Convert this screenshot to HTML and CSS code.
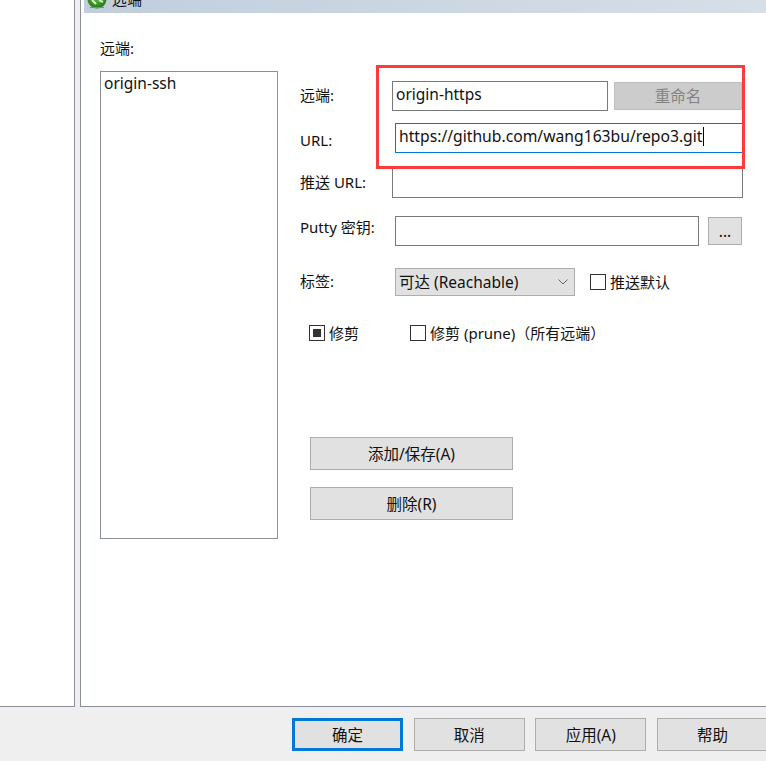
FILE: index.html
```html
<!DOCTYPE html>
<html lang="zh-CN">
<head>
<meta charset="utf-8">
<title>远端</title>
<link rel="stylesheet" href="styles.css">
</head>
<body>
<div class="main">
  <div class="side"></div>
  <div class="panel">
    <div class="titlebar">
      <svg class="logo" width="20" height="20" viewBox="0 0 20 20"><defs><radialGradient id="g" cx="45%" cy="40%" r="60%"><stop offset="0" stop-color="#6fc04a"/><stop offset="1" stop-color="#1f7a1c"/></radialGradient></defs><circle cx="10" cy="10" r="9.5" fill="url(#g)"/><path d="M5 11l4 4M12 11l4 2" stroke="#d8efc8" stroke-width="2" fill="none"/><path d="M3 18.5h14" stroke="#7f8a80" stroke-width="1"/></svg>
      <span class="title-text">远端</span>
    </div>
    <div class="content">
      <div class="left">
        <div class="list-label">远端:</div>
        <div class="listbox">origin-ssh</div>
      </div>
      <div class="right">
        <div class="row row-name">
          <span class="lbl lbl-name">远端:</span>
          <div class="field field-name">origin-https</div>
          <div class="btn btn-disabled">重命名</div>
        </div>
        <div class="row row-url">
          <span class="lbl lbl-url">URL:</span>
          <div class="field field-url">https://github.com/wang163bu/repo3.git<span class="caret"></span></div>
        </div>
        <div class="row row-push">
          <span class="lbl lbl-name">推送 URL:</span>
          <div class="field field-push"></div>
        </div>
        <div class="row row-putty">
          <span class="lbl lbl-putty">Putty 密钥:</span>
          <div class="field field-putty"></div>
          <div class="btn btn-dots">...</div>
        </div>
        <div class="row row-tag">
          <span class="lbl lbl-tag">标签:</span>
          <div class="combo">
            <span>可达 (Reachable)</span>
            <svg class="chev" width="10" height="6" viewBox="0 0 10 6"><path d="M.5.5L5 5 9.5.5" fill="none" stroke="#666" stroke-width="1"/></svg>
          </div>
          <span class="check check-default"></span>
          <span class="check-text">推送默认</span>
        </div>
        <div class="row row-prune">
          <span class="check is-on"></span>
          <span class="check-text prune-one">修剪</span>
          <span class="check"></span>
          <span class="check-text">修剪 (prune)（所有远端）</span>
        </div>
        <div class="btn btn-wide btn-add">添加/保存(A)</div>
        <div class="btn btn-wide btn-del">删除(R)</div>
      </div>
    </div>
    <div class="highlight"></div>
  </div>
</div>
<div class="footer">
  <div class="btn btn-foot btn-default">确定</div>
  <div class="btn btn-foot">取消</div>
  <div class="btn btn-foot">应用(A)</div>
  <div class="btn btn-foot">帮助</div>
</div>
</body>
</html>
```
FILE: styles.css
```css
* { box-sizing: border-box; }
html, body { margin: 0; padding: 0; }
body {
  width: 766px;
  height: 761px;
  overflow: hidden;
  background: #efefef;
  color: #111;
  font-family: "Noto Sans", "Noto Sans CJK SC", sans-serif;
  font-size: 15px;
  line-height: 20px;
}
.main { display: flex; height: 707px; }
.side {
  width: 75px;
  background: #fff;
  border-right: 1px solid #8b8f99;
  border-bottom: 1px solid #8b8f99;
}
.panel {
  position: relative;
  width: 686px;
  margin-left: 5px;
  background: #fff;
  border-left: 1px solid #8b8f99;
  border-bottom: 1px solid #8b8f99;
  overflow: hidden;
}
.titlebar {
  position: relative;
  display: flex;
  height: 13px;
  margin-left: 3px;
  padding-left: 3px;
  overflow: hidden;
  background: linear-gradient(90deg, #c0cedc, #d6dfe8);
}
.logo { flex: none; margin-top: -11px; }
.title-text { margin: -11px 0 0 5px; font-size: 15px; }
.content { display: flex; }
.left { width: 200px; margin-left: 19px; }
.list-label { margin-top: 25px; }
.listbox {
  width: 178px;
  height: 468px;
  margin-top: 13px;
  padding: 1px 3px;
  border: 1px solid #8b8f99;
  font-size: 15.5px;
}
.right { margin-top: 68px; }
.row { display: flex; align-items: center; }
.lbl { flex: none; padding-bottom: 2px; }
.lbl-name { width: 92px; }
.lbl-url { width: 95px; padding-top: 6px; }
.lbl-putty { width: 95px; padding-bottom: 8px; }
.lbl-tag { width: 95px; }
.field {
  height: 30px;
  padding: 0 3px;
  border: 1px solid #7a7a7a;
  background: #fff;
  font-size: 15.5px;
  line-height: 25px;
  white-space: nowrap;
}
.field-name { width: 216px; }
.field-url { width: 349px; border-color: #0078d7; font-size: 15.7px; }
.field-push { width: 351px; }
.field-putty { width: 304px; }
.caret {
  display: inline-block;
  width: 1px;
  height: 19px;
  margin-left: 1px;
  background: #000;
  vertical-align: -4px;
}
.btn {
  display: flex;
  flex: none;
  align-items: center;
  justify-content: center;
  border: 1px solid #adadad;
  background: #e1e1e1;
  font-size: 15.5px;
  white-space: nowrap;
}
.btn-disabled {
  width: 128px;
  height: 28px;
  margin-left: 6px;
  border-color: #bfbfbf;
  background: #ccc;
  color: #838383;
}
.row-url { margin-top: 12px; }
.row-push { margin-top: 15px; }
.row-putty { margin-top: 18px; }
.btn-dots { width: 34px; height: 28px; margin-left: 9px; }
.row-tag { margin-top: 22px; }
.combo {
  display: flex;
  align-items: center;
  justify-content: space-between;
  width: 180px;
  height: 28px;
  padding: 0 6px 0 3px;
  border: 1px solid #adadad;
  background: #e1e1e1;
  font-size: 15.5px;
}
.check {
  flex: none;
  display: flex;
  align-items: center;
  justify-content: center;
  width: 16px;
  height: 16px;
  border: 1px solid #333;
  background: #fff;
}
.is-on::before { content: ""; width: 8px; height: 8px; background: #333; }
.check-default { margin-left: 15px; }
.check-text { margin-left: 4px; }
.row-prune { margin: 27px 0 0 9px; }
.prune-one { width: 77px; }
.prune-one + .check { margin-left: 4px; }
.btn-wide { width: 203px; height: 33px; margin-left: 10px; }
.btn-add { margin-top: 94px; }
.btn-del { margin-top: 17px; }
.highlight {
  position: absolute;
  left: 295px;
  top: 65px;
  width: 369px;
  height: 104px;
  border: 3px solid #fa3c3c;
  pointer-events: none;
}
.footer {
  display: flex;
  gap: 10.67px;
  height: 54px;
  padding: 11px 0 0 292px;
  overflow: hidden;
}
.btn-foot { width: 111px; height: 33px; }
.btn-default { border: 3px solid #0078d7; }
```
